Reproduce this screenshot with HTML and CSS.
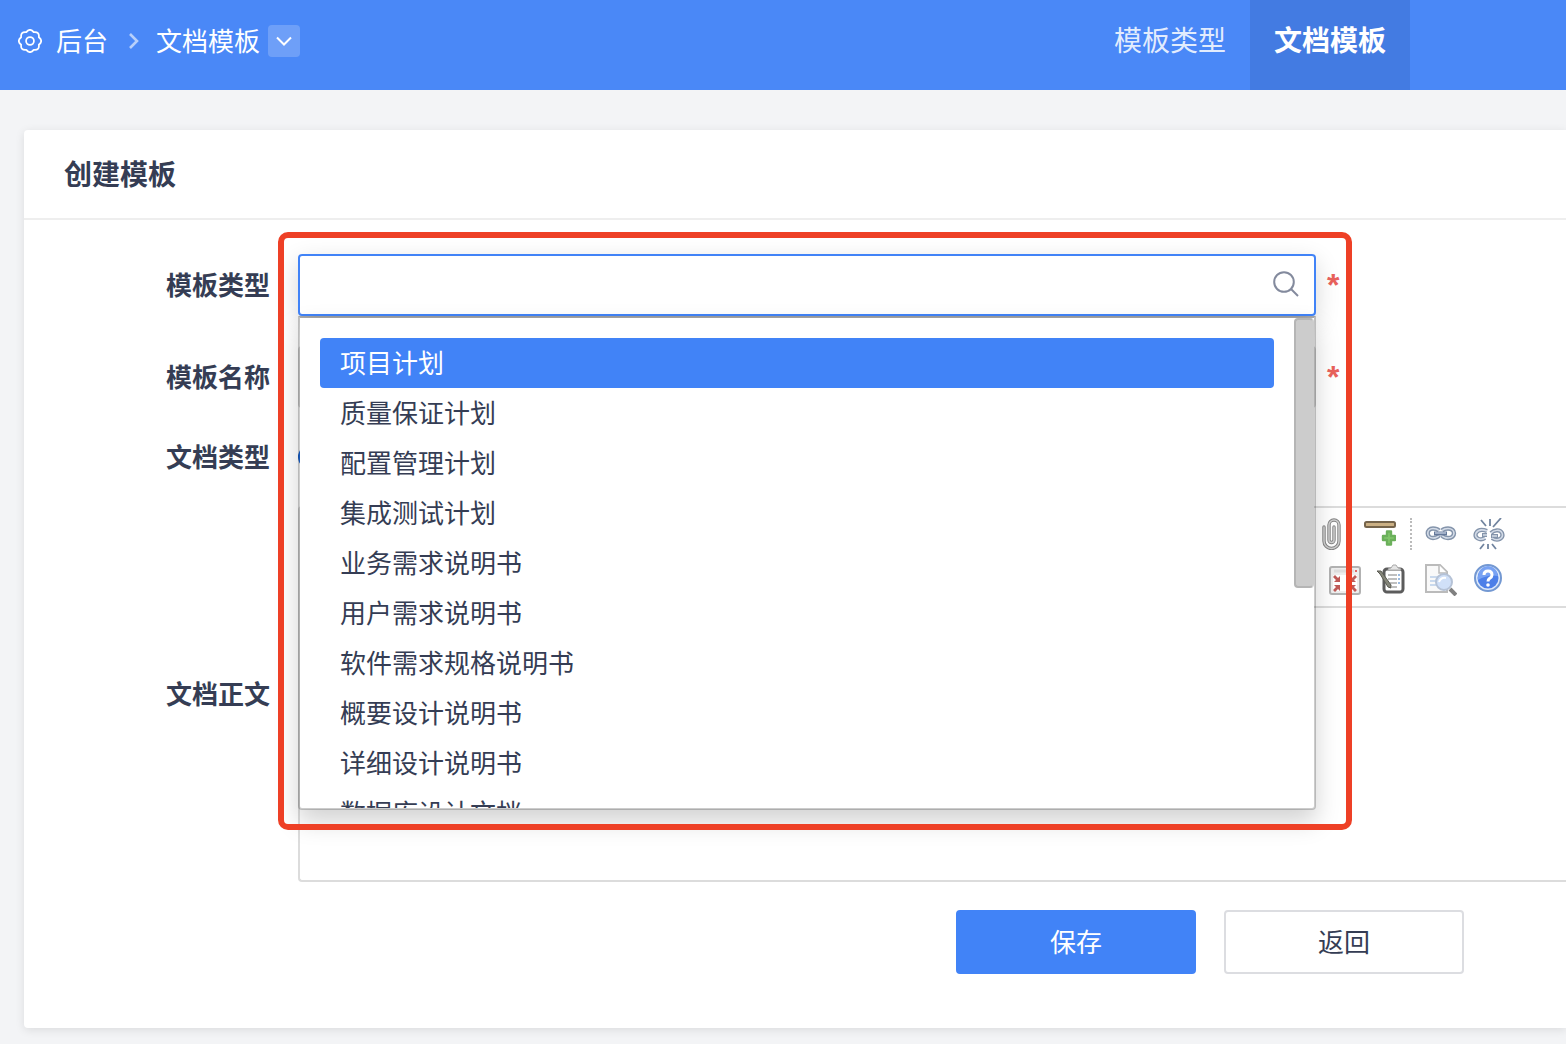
FILE: index.html
```html
<!DOCTYPE html>
<html lang="zh-CN">
<head>
<meta charset="utf-8">
<meta name="viewport" content="width=device-width, initial-scale=1">
<title>创建模板</title>
<link rel="stylesheet" href="styles.css">
</head>
<body>
<header class="topbar">
  <nav class="crumbs" aria-label="路径">
    <svg class="gear" viewBox="0 0 22 22" fill="none" stroke="currentColor" stroke-width="1.600" stroke-linejoin="round" aria-hidden="true">
      <path d="M19.100 7.600Q23.400 11 19.100 14.400Q19.800 19.800 14.400 19.100Q11 23.400 7.600 19.100Q2.200 19.800 2.900 14.400Q-1.400 11 2.900 7.600Q2.200 2.200 7.600 2.900Q11 -1.400 14.400 2.900Q19.800 2.200 19.100 7.600Z"/>
      <circle cx="11" cy="11" r="3.600"/>
    </svg>
    <a class="crumb-link" href="#">后台</a>
    <svg class="crumb-sep" viewBox="0 0 10 16" fill="none" stroke="currentColor" stroke-width="2.600" aria-hidden="true"><path d="M1 1 8 8 1 15"/></svg>
    <a class="crumb-link" href="#">文档模板</a>
    <button class="crumb-more" type="button" aria-label="更多">
      <svg viewBox="0 0 16 10" fill="none" stroke="currentColor" stroke-width="2" aria-hidden="true"><path d="M1 1.500 8 8.500 15 1.500"/></svg>
    </button>
  </nav>
  <nav class="tabs" aria-label="模板">
    <a class="tab" href="#">模板类型</a>
    <a class="tab tab-active" href="#" aria-current="page">文档模板</a>
  </nav>
</header>

<main class="card">
  <h1 class="card-title">创建模板</h1>
  <form class="form">
    <div class="row">
      <label class="label" for="type">模板类型</label>
      <div class="picker">
        <input class="field field-focus" id="type" type="text" role="combobox" aria-expanded="true" aria-controls="type-list">
        <svg class="search" viewBox="0 0 26 26" fill="none" stroke="currentColor" stroke-width="2" aria-hidden="true"><circle cx="11" cy="11" r="9.800"/><path d="M18 18 25 25"/></svg>
        <div class="menu">
          <ul class="options" id="type-list" role="listbox" aria-label="模板类型">
            <li class="option option-active" role="option" aria-selected="true">项目计划</li>
            <li class="option" role="option">质量保证计划</li>
            <li class="option" role="option">配置管理计划</li>
            <li class="option" role="option">集成测试计划</li>
            <li class="option" role="option">业务需求说明书</li>
            <li class="option" role="option">用户需求说明书</li>
            <li class="option" role="option">软件需求规格说明书</li>
            <li class="option" role="option">概要设计说明书</li>
            <li class="option" role="option">详细设计说明书</li>
            <li class="option" role="option">数据库设计文档</li>
          </ul>
          <span class="thumb"></span>
        </div>
        <span class="highlight"></span>
      </div>
      <span class="required">*</span>
    </div>

    <div class="row">
      <label class="label" for="name">模板名称</label>
      <input class="field" id="name" type="text">
      <span class="required">*</span>
    </div>

    <div class="row">
      <span class="label">文档类型</span>
      <input class="radio" type="radio" name="kind" aria-label="富文本" checked>
    </div>

    <div class="row">
      <label class="label" for="content">文档正文</label>
      <div class="editor">
        <div class="toolbar">
          <div class="tools">
            <button class="tool" type="button" aria-label="附件">
              <svg viewBox="0 0 32 32" fill="none" stroke-linecap="round"><path d="M8 9v14a7 7 0 0 0 15 0V7a5 5 0 0 0-10 0v15a2.500 2.500 0 0 0 5 0V9" stroke="#858585" stroke-width="3.400"/><path d="M8 9v14a7 7 0 0 0 15 0V7a5 5 0 0 0-10 0v15a2.500 2.500 0 0 0 5 0V9" stroke="#cfcfcf" stroke-width="1.500"/></svg>
            </button>
            <button class="tool" type="button" aria-label="分隔线">
              <svg viewBox="0 0 32 32"><rect x="1" y="4" width="30" height="5" rx="1.500" fill="#cbb084" stroke="#75644b" stroke-width="2"/><path d="M23 13.500h4v4.500h4v4h-4v4.500h-4V22h-4v-4h4z" fill="#80c66a" stroke="#6bb05b" stroke-width="2.400" stroke-linejoin="round"/></svg>
            </button>
            <span class="tool-sep"></span>
            <button class="tool" type="button" aria-label="链接">
              <svg viewBox="0 0 32 32" fill="none"><g stroke="#8494ab" stroke-width="4.400"><path d="M14 12.500Q12 10.500 8 10.500C1 10.500 1 20 8 20Q12 20 14 17.500M17 12.500Q19 10.500 23 10.500C31 10.500 31 20 23 20Q19 20 17 17.500"/></g><g stroke="#d4dce8" stroke-width="1.600"><path d="M14 12.500Q12 10.500 8 10.500C1 10.500 1 20 8 20Q12 20 14 17.500M17 12.500Q19 10.500 23 10.500C31 10.500 31 20 23 20Q19 20 17 17.500"/></g><path d="M9 15.500H22" stroke="#64789a" stroke-width="4"/><path d="M10 15H21" stroke="#b9c5d8" stroke-width="1.500"/></svg>
            </button>
            <button class="tool" type="button" aria-label="取消链接">
              <svg viewBox="0 0 32 32" fill="none"><g stroke="#8494ab" stroke-width="4.200"><path d="M14 13Q6 10 3 15C1 20 7 23 12 20M9 17h5M19 20C25 24 31 20 29 15C27 11 21 12 18 15M18 18h7"/></g><g stroke="#d4dce8" stroke-width="1.500"><path d="M14 13Q6 10 3 15C1 20 7 23 12 20M10 17h4M19 20C25 24 31 20 29 15C27 11 21 12 18 15M19 18h5"/></g><path d="M8 2 13 8M17 1v7M28 0 20 9M7 31 11 26M15 31v-5M23 31 19 26" stroke="#71849f" stroke-width="1.800"/></svg>
            </button>
          </div>
          <div class="tools">
            <button class="tool" type="button" aria-label="退出全屏">
              <svg viewBox="0 0 32 32"><rect x="1" y="3" width="30" height="27" rx="2" fill="#eee" stroke="#b2b2b2" stroke-width="2"/><path d="M4 11h24v16H4z" fill="#fff"/><path d="M5 7h20" stroke="#ddd" stroke-width="3"/><path d="M26 6h2v2h-2z" fill="#d66"/><path d="M11 12v6H5l2-2-3-3 2-2 3 3zM21 12v6h6l-2-2 3-3-2-2-3 3zM11 27v-6H5l2 2-3 3 2 2 3-3zM21 27v-6h6l-2 2 3 3-2 2-3-3z" fill="#bf5a57"/></svg>
            </button>
            <button class="tool" type="button" aria-label="模板">
              <svg viewBox="0 0 32 32" fill="none"><rect x="7" y="5" width="19" height="23" rx="3" fill="#fff" stroke="#5c5c5c" stroke-width="3"/><path d="M11 6q0-2 3-2l2-3h3l2 3q3 0 3 2z" fill="#e5e5e5" stroke="#aaa"/><path d="M11 11h9M11 15h9M13 19h7M15 23h5" stroke="#aaa" stroke-width="1.500"/><path d="M21 11h2M21 15h2M21 19h2" stroke="#9cbbe0" stroke-width="2"/><path d="M0 7h4L14 21v3l-3-1L3 10z" fill="#85867a" stroke="#5a5b52"/></svg>
            </button>
            <button class="tool" type="button" aria-label="预览">
              <svg viewBox="0 0 32 32" fill="none"><path d="M1 1h14l7 7v20H1z" fill="#f9f9f9" stroke="#bbb" stroke-width="2"/><path d="M14 1v8h8" fill="#fff" stroke="#bbb" stroke-width="1.500"/><path d="M5 13h9M5 17h8M5 21h8" stroke="#b9cee9" stroke-width="1.500"/><path d="M25 25 31 31" stroke="#808080" stroke-width="4"/><circle cx="19" cy="18" r="8" fill="#d0e0f8" stroke="#b5c2d6" stroke-width="2"/><path d="M14 18q2-5 7-4" stroke="#fff" stroke-width="2"/></svg>
            </button>
            <button class="tool" type="button" aria-label="帮助">
              <svg viewBox="0 0 32 32" fill="none"><circle cx="15" cy="14" r="13" fill="#dce8fa" stroke="#7398d2" stroke-width="2"/><circle cx="15" cy="14" r="10.500" fill="#4c7fe8"/><path d="M5 12a10 10 0 0 1 20 0q-10-2-20 4z" fill="#78a2f3"/><path d="M11 11q0-4 4-4t4 4q0 2-2.500 3.500Q15 15.500 15 17.500" stroke="#fff" stroke-width="3"/><circle cx="15" cy="21" r="1.800" fill="#fff"/></svg>
            </button>
          </div>
        </div>
        <textarea class="content" id="content"></textarea>
      </div>
    </div>

    <div class="actions">
      <button class="btn btn-primary" type="submit">保存</button>
      <button class="btn" type="button">返回</button>
    </div>
  </form>
</main>
</body>
</html>
```
FILE: styles.css
```css
* {
  box-sizing: border-box;
}

body {
  margin: 0;
  background: #f3f4f6;
  color: #353d54;
  font-family: "Noto Sans CJK SC", sans-serif;
  font-size: 26px;
  line-height: 38px;
  overflow-x: hidden;
}

button,
input,
textarea {
  font: inherit;
  color: inherit;
}

a {
  color: inherit;
  text-decoration: none;
}

svg {
  display: block;
}

/* Top bar */
.topbar {
  display: flex;
  justify-content: space-between;
  height: 90px;
  padding: 0 156px 0 18px;
  background: #4a88f7;
  color: #fff;
}

.crumbs {
  display: flex;
  align-items: center;
  padding-bottom: 8px;
}

.crumb-link {
  padding-bottom: 2px;
}

.gear {
  width: 24px;
  height: 24px;
  margin-right: 14px;
}

.crumb-sep {
  width: 10px;
  height: 16px;
  margin: 0 17px 0 21px;
  opacity: 0.6;
}

.crumb-more {
  display: grid;
  place-items: center;
  width: 32px;
  height: 32px;
  margin-left: 8px;
  padding: 0;
  border: 0;
  border-radius: 4px;
  background: rgba(255, 255, 255, 0.2);
}

.crumb-more svg {
  width: 16px;
  height: 10px;
  color: #fff;
}

.tabs {
  display: flex;
}

.tab {
  padding: 0 24px;
  font-size: 28px;
  line-height: 78px;
  color: rgba(255, 255, 255, 0.85);
}

.tab-active {
  background: #437be2;
  color: #fff;
  font-weight: 700;
}

/* Card */
.card {
  margin: 40px 0 16px 24px;
  border-radius: 4px 0 0 4px;
  background: #fff;
  box-shadow: 0 2px 10px rgba(0, 0, 0, 0.1);
}

.card-title {
  margin: 0;
  padding: 0 40px 2px;
  border-bottom: 2px solid #eee;
  font-size: 28px;
  font-weight: 700;
  line-height: 86px;
}

.form {
  display: flex;
  flex-direction: column;
  gap: 30px;
  padding: 34px 0 54px;
}

.row {
  display: grid;
  grid-template-columns: 246px minmax(0, 1fr) 222px;
  column-gap: 28px;
  align-items: center;
}

.label {
  padding-bottom: 2px;
  line-height: 36px;
  text-align: right;
  font-weight: 700;
}

.field {
  display: block;
  width: 100%;
  height: 62px;
  padding: 0 20px;
  border: 2px solid #dcdcdc;
  border-radius: 4px;
  background: #fff;
  outline: 0;
}

.field-focus {
  border-color: #4183f7;
  box-shadow: 0 8px 24px rgba(0, 0, 0, 0.16);
}

.required {
  margin-left: -17px;
  color: #e9625c;
  font-family: "Liberation Sans", sans-serif;
  font-size: 32px;
  font-weight: 700;
}

.radio {
  appearance: none;
  width: 24px;
  height: 24px;
  margin: 0;
  border: 7px solid #1a6ae0;
  border-radius: 50%;
}

/* Type picker */
.picker {
  position: relative;
}

.search {
  position: absolute;
  top: 17px;
  right: 17px;
  width: 26px;
  height: 26px;
  color: #838a9d;
}

.menu {
  position: absolute;
  z-index: 2;
  top: 62px;
  left: 0;
  right: 0;
  height: 494px;
  overflow: hidden;
  border: 2px solid rgba(0, 0, 0, 0.2);
  border-top-color: rgba(0, 0, 0, 0.3);
  border-radius: 0 0 4px 4px;
  background: #fff;
  background-clip: padding-box;
  box-shadow: 0 12px 24px rgba(0, 0, 0, 0.175);
}

.options {
  margin: 0;
  padding: 20px 40px 20px 20px;
  list-style: none;
}

.option {
  padding: 0 20px 2px;
  border-radius: 4px;
  line-height: 48px;
}

.option-active {
  background: #4183f7;
  color: #fff;
}

.thumb {
  position: absolute;
  top: 0;
  right: 0;
  width: 20px;
  height: 270px;
  border: 2px solid #b5b5b5;
  border-right-color: #ccc;
  border-radius: 4px;
  background: #ccc;
}

.highlight {
  position: absolute;
  z-index: 3;
  top: -22px;
  left: -20px;
  right: -36px;
  height: 598px;
  border: 6px solid #ee4026;
  border-radius: 10px;
  pointer-events: none;
}

/* Editor */
.editor {
  grid-column: 2 / -1;
  border: 2px solid #dcdcdc;
  border-right: 0;
  border-radius: 4px 0 0 4px;
}

.toolbar {
  display: flex;
  flex-direction: column;
  gap: 14px;
  padding: 10px 61px 10px 10px;
  border-bottom: 2px solid #dcdcdc;
}

.tools {
  display: flex;
  justify-content: flex-end;
  gap: 16px;
}

.tool {
  width: 32px;
  height: 32px;
  padding: 0;
  border: 0;
  background: none;
}

.tool-sep {
  width: 2px;
  margin: 0 -3px 0 -2px;
  border-left: 2px dotted #bbb;
}

.content {
  display: block;
  width: 100%;
  height: 272px;
  padding: 10px;
  border: 0;
  outline: 0;
  resize: none;
  background: none;
}

/* Actions */
.actions {
  display: flex;
  justify-content: flex-end;
  gap: 28px;
  margin-top: -2px;
  padding-right: 102px;
}

.btn {
  width: 240px;
  height: 64px;
  padding: 0 0 2px;
  border: 2px solid #dcdde1;
  border-radius: 4px;
  background: #fff;
}

.btn-primary {
  border-color: #4183f7;
  background: #4183f7;
  color: #fff;
}
```
